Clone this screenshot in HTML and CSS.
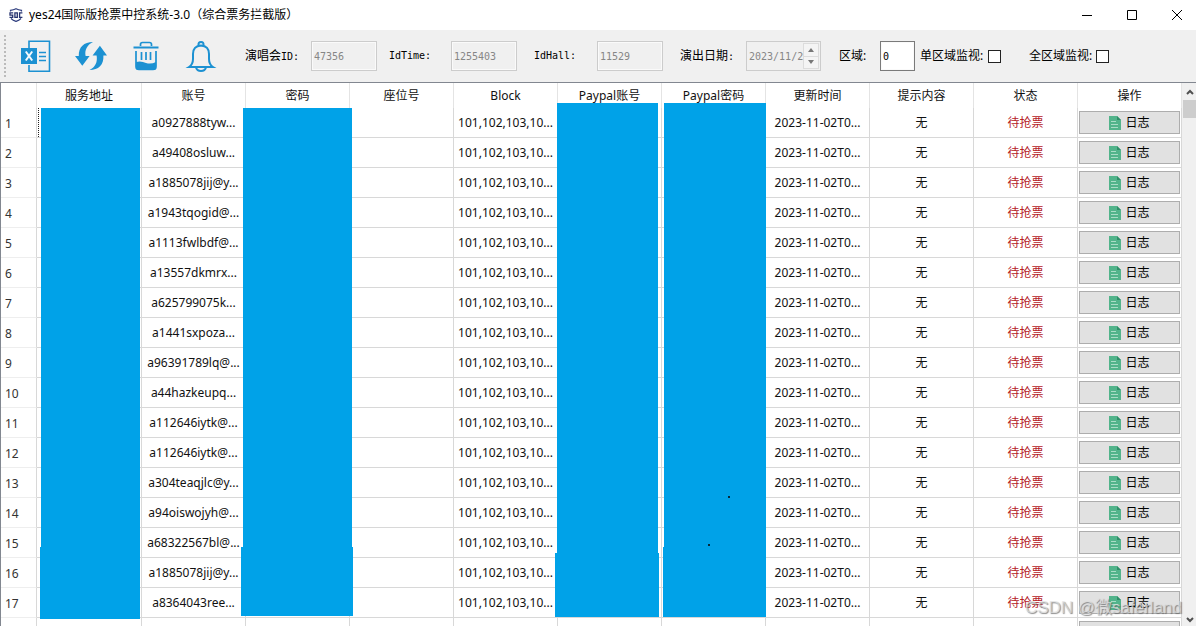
FILE: index.html
```html
<!DOCTYPE html>
<html lang="zh-CN">
<head>
<meta charset="utf-8">
<title>yes24国际版抢票中控系统-3.0</title>
<link rel="stylesheet" href="styles.css">
</head>
<body>
<header class="titlebar">
  <svg class="logo" viewBox="0 0 14 14" aria-hidden="true">
    <path d="M1.500 3.500V2.300Q4.500 2 7 .7 9.500 2 12.500 2.300V3.500M2 10.500Q4 12.500 7 13.400 10 12.500 12 10.500" fill="none" stroke="#2b3a7c" stroke-width="1.200"/>
    <path d="M4.200 4.800H1v2.300h2.700v2.300H.5M5.900 4.800h2.400v4.600H5.900zM13.400 4.800h-2.800v4.600h2.800" fill="none" stroke="#26336f" stroke-width="1.300"/>
  </svg>
  <h1 class="title">yes24国际版抢票中控系统-3.0（综合票务拦截版）</h1>
  <div class="window-controls">
    <button class="window-button" aria-label="最小化"><svg viewBox="0 0 12 12"><path d="M1 6.500h10"/></svg></button>
    <button class="window-button" aria-label="最大化"><svg viewBox="0 0 12 12"><path d="M1.500 1.500h9v9h-9z"/></svg></button>
    <button class="window-button" aria-label="关闭"><svg viewBox="0 0 12 12"><path d="M1 1l10 10M11 1L1 11"/></svg></button>
  </div>
</header>

<div class="toolbar">
  <div class="grip"></div>
  <div class="tools">
    <button class="tool" aria-label="导出 Excel">
      <svg viewBox="0 0 32 32">
        <path d="M9 8V1.200h20.500v30H9V25" fill="none" stroke="#1c91d2" stroke-width="1.600"/>
        <path d="M1 8h16v16H1z" fill="#1c91d2"/>
        <path d="M5.800 11.500l6.400 9M12.200 11.500l-6.400 9" stroke="#f4f9fc" stroke-width="2"/>
        <path d="M19 12.500h7M19 16.500h7M19 20.500h7" stroke="#1c91d2" stroke-width="1.600"/>
      </svg>
    </button>
    <button class="tool" aria-label="刷新">
      <svg viewBox="0 0 32 32" fill="#1c91d2">
        <path d="M18 2C9 2 3.500 7 3.800 16H0l7.300 9.700L14.600 16h-4C9.500 10 12 5 18 2z"/>
        <path d="M14.500 30C23.500 30 29 25 28.400 15.500H32L24.900 5.700 17.600 15.500h4C22.700 22 20.500 27 14.500 30z"/>
      </svg>
    </button>
    <button class="tool" aria-label="删除">
      <svg viewBox="0 0 32 32">
        <path d="M10.500 6V4.500q0-2 2-2h7q2 0 2 2V6" fill="none" stroke="#1c91d2" stroke-width="1.700"/>
        <path d="M3.500 7.500h25" stroke="#1c91d2" stroke-width="2"/>
        <path d="M6 11v15.500q0 3 3 3h14q3 0 3-3V11M11.500 12v8M16 12v8M20.500 12v8" fill="none" stroke="#1c91d2" stroke-width="1.700"/>
        <path d="M6 22q5-1.500 10 1 5 1.500 10-1v5q0 3-3 3H9q-3 0-3-3z" fill="#1c91d2"/>
      </svg>
    </button>
    <button class="tool" aria-label="通知">
      <svg viewBox="0 0 32 32" fill="none" stroke="#1c91d2" stroke-width="2">
        <path d="M4 27h24q-4-2.500-4-8v-5q0-8-8-8.500-8 .5-8 8.500v5q0 5.500-4 8zM13.500 5.500q-.5-3.500 2.500-3.500t2.500 3.500M11 27.500q1 3.500 5 3.500t5-3.500"/>
      </svg>
    </button>
  </div>
  <form class="filters">
    <label for="concert">演唱会<span class="mono">ID:</span></label>
    <input class="field" id="concert" value="47356" disabled>
    <label class="mono" for="idtime">IdTime:</label>
    <input class="field" id="idtime" value="1255403" disabled>
    <label class="mono" for="idhall">IdHall:</label>
    <input class="field" id="idhall" value="11529" disabled>
    <label for="date">演出日期<span class="mono">:</span></label>
    <div class="date">
      <input class="date-input" id="date" value="2023/11/2" disabled>
      <div class="spinner">
        <button type="button" class="step" aria-label="增加" disabled><svg viewBox="0 0 6 4"><path d="M0 4l3-4 3 4z"/></svg></button>
        <button type="button" class="step" aria-label="减少" disabled><svg viewBox="0 0 6 4"><path d="M0 0l3 4 3-4z"/></svg></button>
      </div>
    </div>
    <label for="area">区域:</label>
    <input class="field area" id="area" value="0">
    <label for="single">单区域监视:</label>
    <input class="check" id="single" type="checkbox">
    <label for="all">全区域监视:</label>
    <input class="check" id="all" type="checkbox">
  </form>
</div>

<main class="pane">
  <div class="view">
    <table class="grid">
      <thead>
        <tr><th class="index"></th><th class="address">服务地址</th><th>账号</th><th>密码</th><th>座位号</th><th>Block</th><th>Paypal账号</th><th>Paypal密码</th><th>更新时间</th><th>提示内容</th><th>状态</th><th>操作</th></tr>
      </thead>
      <tbody id="rows"></tbody>
    </table>
    <svg class="masks" width="800" height="540" aria-hidden="true">
      <path d="M37.500 25v29" stroke="#222" stroke-dasharray="1 1"/>
      <g fill="#00a2e8">
        <path d="M40 25h99v511H39V464h1z"/>
        <path d="M242 25h109v439h1v69H240v-69h2z"/>
        <path d="M556 20h101v450h1v64H554v-64h2z"/>
        <path d="M663 20h102v514H662v-70h1z"/>
      </g>
      <path d="M727 413h2v2h-2zM707 461h2v2h-2z" fill="#06293a"/>
    </svg>
  </div>
  <div class="scrollbar">
    <button class="arrow" aria-label="向上滚动"><svg viewBox="0 0 8 6"><path d="M1 5l3-3 3 3"/></svg></button>
    <div class="thumb"></div>
    <button class="arrow down" aria-label="向下滚动"><svg viewBox="0 0 8 6"><path d="M1 1l3 3 3-3"/></svg></button>
  </div>
  <div class="watermark">CSDN @微saferland</div>
</main>
<script src="script.js"></script>
</body>
</html>
```

FILE: styles.css
```css
* { box-sizing: border-box; }

body {
  margin: 0;
  height: 100vh;
  display: flex;
  flex-direction: column;
  overflow: hidden;
  background: #fff;
  color: #111;
  font: 12px/16px "Noto Sans", "Noto Sans CJK SC", sans-serif;
}

button { padding: 0; border: 0; background: none; color: inherit; font: inherit; }
svg { display: block; }

.titlebar { display: flex; align-items: center; flex: none; height: 30px; padding-left: 9px; }
.logo { width: 14px; height: 14px; }
.title { flex: 1; margin: 0 0 0 6px; font-size: 12px; font-weight: 400; color: #000; }
.window-controls { display: flex; margin-right: -3px; }
.window-button { display: grid; place-items: center; width: 45px; height: 28px; }
.window-button svg { width: 12px; height: 12px; fill: none; stroke: #000; }

.toolbar { display: flex; align-items: center; flex: none; height: 52px; background: #f0f0f0; color: #000; }
.grip { width: 2px; height: 42px; margin: 0 14px 0 4px; background: repeating-linear-gradient(#bbb 0 2px, #f0f0f0 2px 4px); }
.tools { display: flex; gap: 23px; margin-right: 28px; }
.tool svg { width: 32px; height: 32px; }
.filters {
  display: grid;
  grid-template-columns: 66px 78px 62px 83px 63px 83px 66px 93px 41px 40px 68px 41px 67px 14px;
  align-items: center;
  white-space: nowrap;
}
.mono, .field, .date-input { font-family: "DejaVu Sans Mono", monospace; font-size: 10px; }
.field { width: 66px; height: 30px; padding: 0 2px; border: 1px solid #ccc; background: #f0f0f0; box-shadow: inset 0 0 0 1px #fafafa; color: #000; }
.field:disabled, .date-input:disabled { color: #868686; }
.field.area { width: 35px; border-color: #7a7a7a; background: #fff; }
.date { display: flex; width: 75px; height: 30px; padding: 1px; border: 1px solid #ccc; }
.date-input { flex: 1; min-width: 0; padding: 0 0 0 1px; border: 0; background: transparent; }
.spinner { display: flex; flex-direction: column; flex: none; width: 16px; border: 1px solid #dcdcdc; background: #f4f4f4; }
.step { display: grid; place-items: center; flex: 1; }
.step + .step { border-top: 1px solid #dcdcdc; }
.step svg { width: 6px; height: 4px; fill: #777; }
.check { appearance: none; width: 13px; height: 13px; margin: 0; border: 1px solid #222; background: #fff; }

.pane { position: relative; display: flex; flex: 1; min-height: 0; border-top: 1px solid #828790; border-left: 1px solid #828790; }
.view { position: relative; flex: 1; min-width: 0; overflow: hidden; }
.grid { width: 100%; table-layout: fixed; border-collapse: separate; border-spacing: 0; }
.grid th { height: 25px; padding: 0; border-right: 1px solid #e4e4e4; font-weight: 400; }
.grid th.index { width: 36px; }
.grid th.address { width: 105px; }
.grid td { height: 30px; padding: 0; border-right: 1px solid #d8d8d8; border-bottom: 1px solid #d8d8d8; text-align: center; white-space: nowrap; overflow: hidden; }
.grid td.index { padding: 2px 0 0 4px; border-bottom-color: #eee; text-align: left; color: #333; }
.grid td.status { color: #b5201f; }
.grid td.action { padding: 0 1px; }
.log { display: flex; align-items: center; justify-content: center; gap: 4px; width: 100%; height: 23px; border: 1px solid #adadad; background: #e1e1e1; color: #000; }
.log svg { width: 12px; height: 14px; }

.masks { position: absolute; top: 0; left: 0; }

.scrollbar { display: flex; flex-direction: column; flex: none; width: 14px; padding-left: 1px; background: #f0f0f0; }
.arrow { display: grid; place-items: center; height: 17px; }
.arrow svg { width: 8px; height: 6px; fill: none; stroke: #505050; stroke-width: 2; }
.arrow.down { height: 12px; margin-top: auto; }
.thumb { height: 18px; background: #cdcdcd; }

.watermark {
  position: absolute;
  right: 14px;
  bottom: 7px;
  color: rgba(225, 225, 225, 0.7);
  font: 17px/22px "Liberation Sans", "Noto Sans CJK SC", sans-serif;
  text-shadow: 1px 1px 1px rgba(90, 90, 90, 0.7);
}
```

FILE: script.js
```javascript
const accounts = [
  "a0927888tyw...", "a49408osluw...", "a1885078jij@y...", "a1943tqogid@...",
  "a1113fwlbdf@...", "a13557dkmrx...", "a625799075k...", "a1441sxpoza...",
  "a96391789lq@...", "a44hazkeupq...", "a112646iytk@...", "a112646iytk@...",
  "a304teaqjlc@y...", "a94oiswojyh@...", "a68322567bl@...", "a1885078jij@y...",
  "a8364043ree..."
];

const icon = `<svg viewBox="0 0 12 14" aria-hidden="true">
  <path d="M0 0h8l4 4v10H0z" fill="#52b48b"/>
  <path d="M8 0v4h4z" fill="#2f8d68"/>
  <path d="M2 5.500h5M2 8.500h7M2 11.500h7" stroke="#a9dcc6"/>
</svg>`;

const rows = accounts.map((account, i) => `<tr>
  <td class="index">${i + 1}</td><td></td><td>${account}</td><td></td><td></td>
  <td>101,102,103,10...</td><td></td><td></td><td>2023-11-02T0...</td><td>无</td>
  <td class="status">待抢票</td>
  <td class="action"><button class="log">${icon}日志</button></td>
</tr>`);

// Trailing row that is cut off by the bottom of the view.
rows.push(`<tr><td class="index"></td>${"<td></td>".repeat(10)}
  <td class="action"><button class="log" aria-label="日志">${icon}</button></td></tr>`);

document.getElementById("rows").innerHTML = rows.join("");
```
